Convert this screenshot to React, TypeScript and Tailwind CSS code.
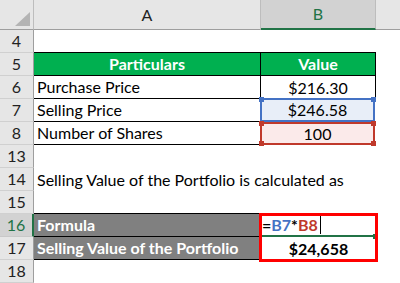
import React from "react";

const RowHead = ({ n, active }: { n: string; active?: boolean }) => (
  <div
    className={
      active
        ? "w-[34px] shrink-0 h-full flex items-center justify-center bg-[#d2d2d2] text-[#217346] border-b border-[#c8c8c8] border-r-2 border-r-[#217346]"
        : "w-[34px] shrink-0 h-full flex items-center justify-center bg-[#e6e6e6] text-[#222] border-b border-[#d0d0d0] border-r border-r-[#9e9e9e]"
    }
  >
    {n}
  </div>
);

const Handle = ({ pos, color }: { pos: string; color: string }) => (
  <div className={`absolute w-[5px] h-[5px] ${pos} ${color}`} />
);

export default function App() {
  return (
    <div className="w-[400px] h-[283px] bg-white overflow-hidden font-['Lato','Liberation_Sans',sans-serif] text-[16px] leading-none text-black">
      {/* column header */}
      <div className="flex h-[30px] bg-[#e6e6e6]">
        <div className="w-[34px] shrink-0 h-full border-r border-[#bdbdbd] border-b border-b-[#9e9e9e] flex items-end justify-end pr-[3px] pb-[3px]">
          <svg width="15" height="14" viewBox="0 0 15 14">
            <polygon points="15,0 15,14 0,14" fill="#b4b4b4" />
          </svg>
        </div>
        <div className="w-[227px] shrink-0 h-full flex items-center justify-center border-r border-[#bdbdbd] border-b border-b-[#9e9e9e] text-[#222]">
          A
        </div>
        <div className="w-[115px] shrink-0 h-full flex items-center justify-center bg-[#d2d2d2] border-r border-[#bdbdbd] border-b-2 border-b-[#217346] text-[#217346]">
          B
        </div>
        <div className="flex-1 h-full border-b border-[#9e9e9e]" />
      </div>

      {/* row 4 */}
      <div className="flex h-[23px]">
        <RowHead n="4" />
        <div className="w-[227px] shrink-0 border-b border-black" />
        <div className="w-[115px] shrink-0 border-b border-black" />
      </div>

      {/* row 5 */}
      <div className="flex h-[23px]">
        <RowHead n="5" />
        <div className="w-[227px] shrink-0 bg-[#00b050] border-b border-r border-black flex items-center justify-center font-bold text-white">
          Particulars
        </div>
        <div className="w-[115px] shrink-0 bg-[#00b050] border-b border-r border-black flex items-center justify-center font-bold text-white">
          Value
        </div>
      </div>

      {/* row 6 */}
      <div className="flex h-[23px]">
        <RowHead n="6" />
        <div className="w-[227px] shrink-0 border-b border-r border-black flex items-center pl-[3px]">
          Purchase Price
        </div>
        <div className="w-[115px] shrink-0 border-r border-black flex items-center justify-center">
          $216.30
        </div>
      </div>

      {/* row 7 */}
      <div className="flex h-[23px]">
        <RowHead n="7" />
        <div className="w-[227px] shrink-0 border-b border-black flex items-center pl-[3px]">
          Selling Price
        </div>
        <div className="w-[115px] shrink-0 relative bg-[#e8eef8] border-2 border-[#4472c4] -ml-[1px] -mt-[1px] h-[24px] flex items-center justify-center">
          $246.58
          <Handle pos="-left-[3px] -top-[3px]" color="bg-[#4472c4]" />
          <Handle pos="-right-[3px] -top-[3px]" color="bg-[#4472c4]" />
        </div>
      </div>

      {/* row 8 */}
      <div className="flex h-[23px]">
        <RowHead n="8" />
        <div className="w-[227px] shrink-0 border-b border-black flex items-center pl-[3px]">
          Number of Shares
        </div>
        <div className="w-[115px] shrink-0 relative bg-[#fbeaea] border-2 border-[#c0392b] -ml-[1px] flex items-center justify-center">
          100
          <Handle pos="-left-[3px] -top-[3px]" color="bg-[#c0392b]" />
          <Handle pos="-right-[3px] -top-[3px]" color="bg-[#c0392b]" />
          <Handle pos="-left-[3px] -bottom-[3px]" color="bg-[#c0392b]" />
          <Handle pos="-right-[3px] -bottom-[3px]" color="bg-[#c0392b]" />
        </div>
      </div>

      {/* row 13 */}
      <div className="flex h-[23px]">
        <RowHead n="13" />
      </div>

      {/* row 14 */}
      <div className="flex h-[23px]">
        <RowHead n="14" />
        <div className="flex items-center pl-[3px] whitespace-nowrap">
          Selling Value of the Portfolio is calculated as
        </div>
      </div>

      {/* row 15 */}
      <div className="flex h-[23px]">
        <RowHead n="15" />
        <div className="w-[227px] shrink-0 border-b border-black" />
        <div className="w-[115px] shrink-0 border-b border-black" />
      </div>

      {/* rows 16-17 */}
      <div className="flex h-[46px]">
        <div className="flex flex-col w-[34px] shrink-0">
          <div className="h-[23px]">
            <RowHead n="16" active />
          </div>
          <div className="h-[23px]">
            <RowHead n="17" />
          </div>
        </div>
        <div className="flex flex-col w-[227px] shrink-0">
          <div className="h-[23px] bg-[#808080] border-b border-r border-black flex items-center pl-[3px] font-bold text-white">
            Formula
          </div>
          <div className="h-[23px] bg-[#808080] border-b border-r border-black flex items-center pl-[3px] font-bold text-white whitespace-nowrap">
            Selling Value of the Portfolio
          </div>
        </div>
        <div className="relative flex flex-col w-[115px] shrink-0">
          <div className="relative h-[23px] border-b-2 border-[#217346] flex items-center pl-[1px] font-bold">
            <span>=</span>
            <span className="text-[#4472c4]">B7</span>
            <span>*</span>
            <span className="text-[#c0392b]">B8</span>
            <span className="ml-[2px] w-[1px] h-[19px] bg-black" />
            <div className="absolute -right-[2px] -bottom-[4px] w-[5px] h-[5px] bg-[#217346]" />
          </div>
          <div className="h-[23px] flex items-center justify-center font-bold">$24,658</div>
          <div className="absolute -left-[2px] -right-[2px] -top-[1px] -bottom-[2px] border-[3px] border-[#ff0000] pointer-events-none" />
        </div>
      </div>

      {/* row 18 */}
      <div className="flex h-[23px]">
        <RowHead n="18" />
      </div>
    </div>
  );
}
